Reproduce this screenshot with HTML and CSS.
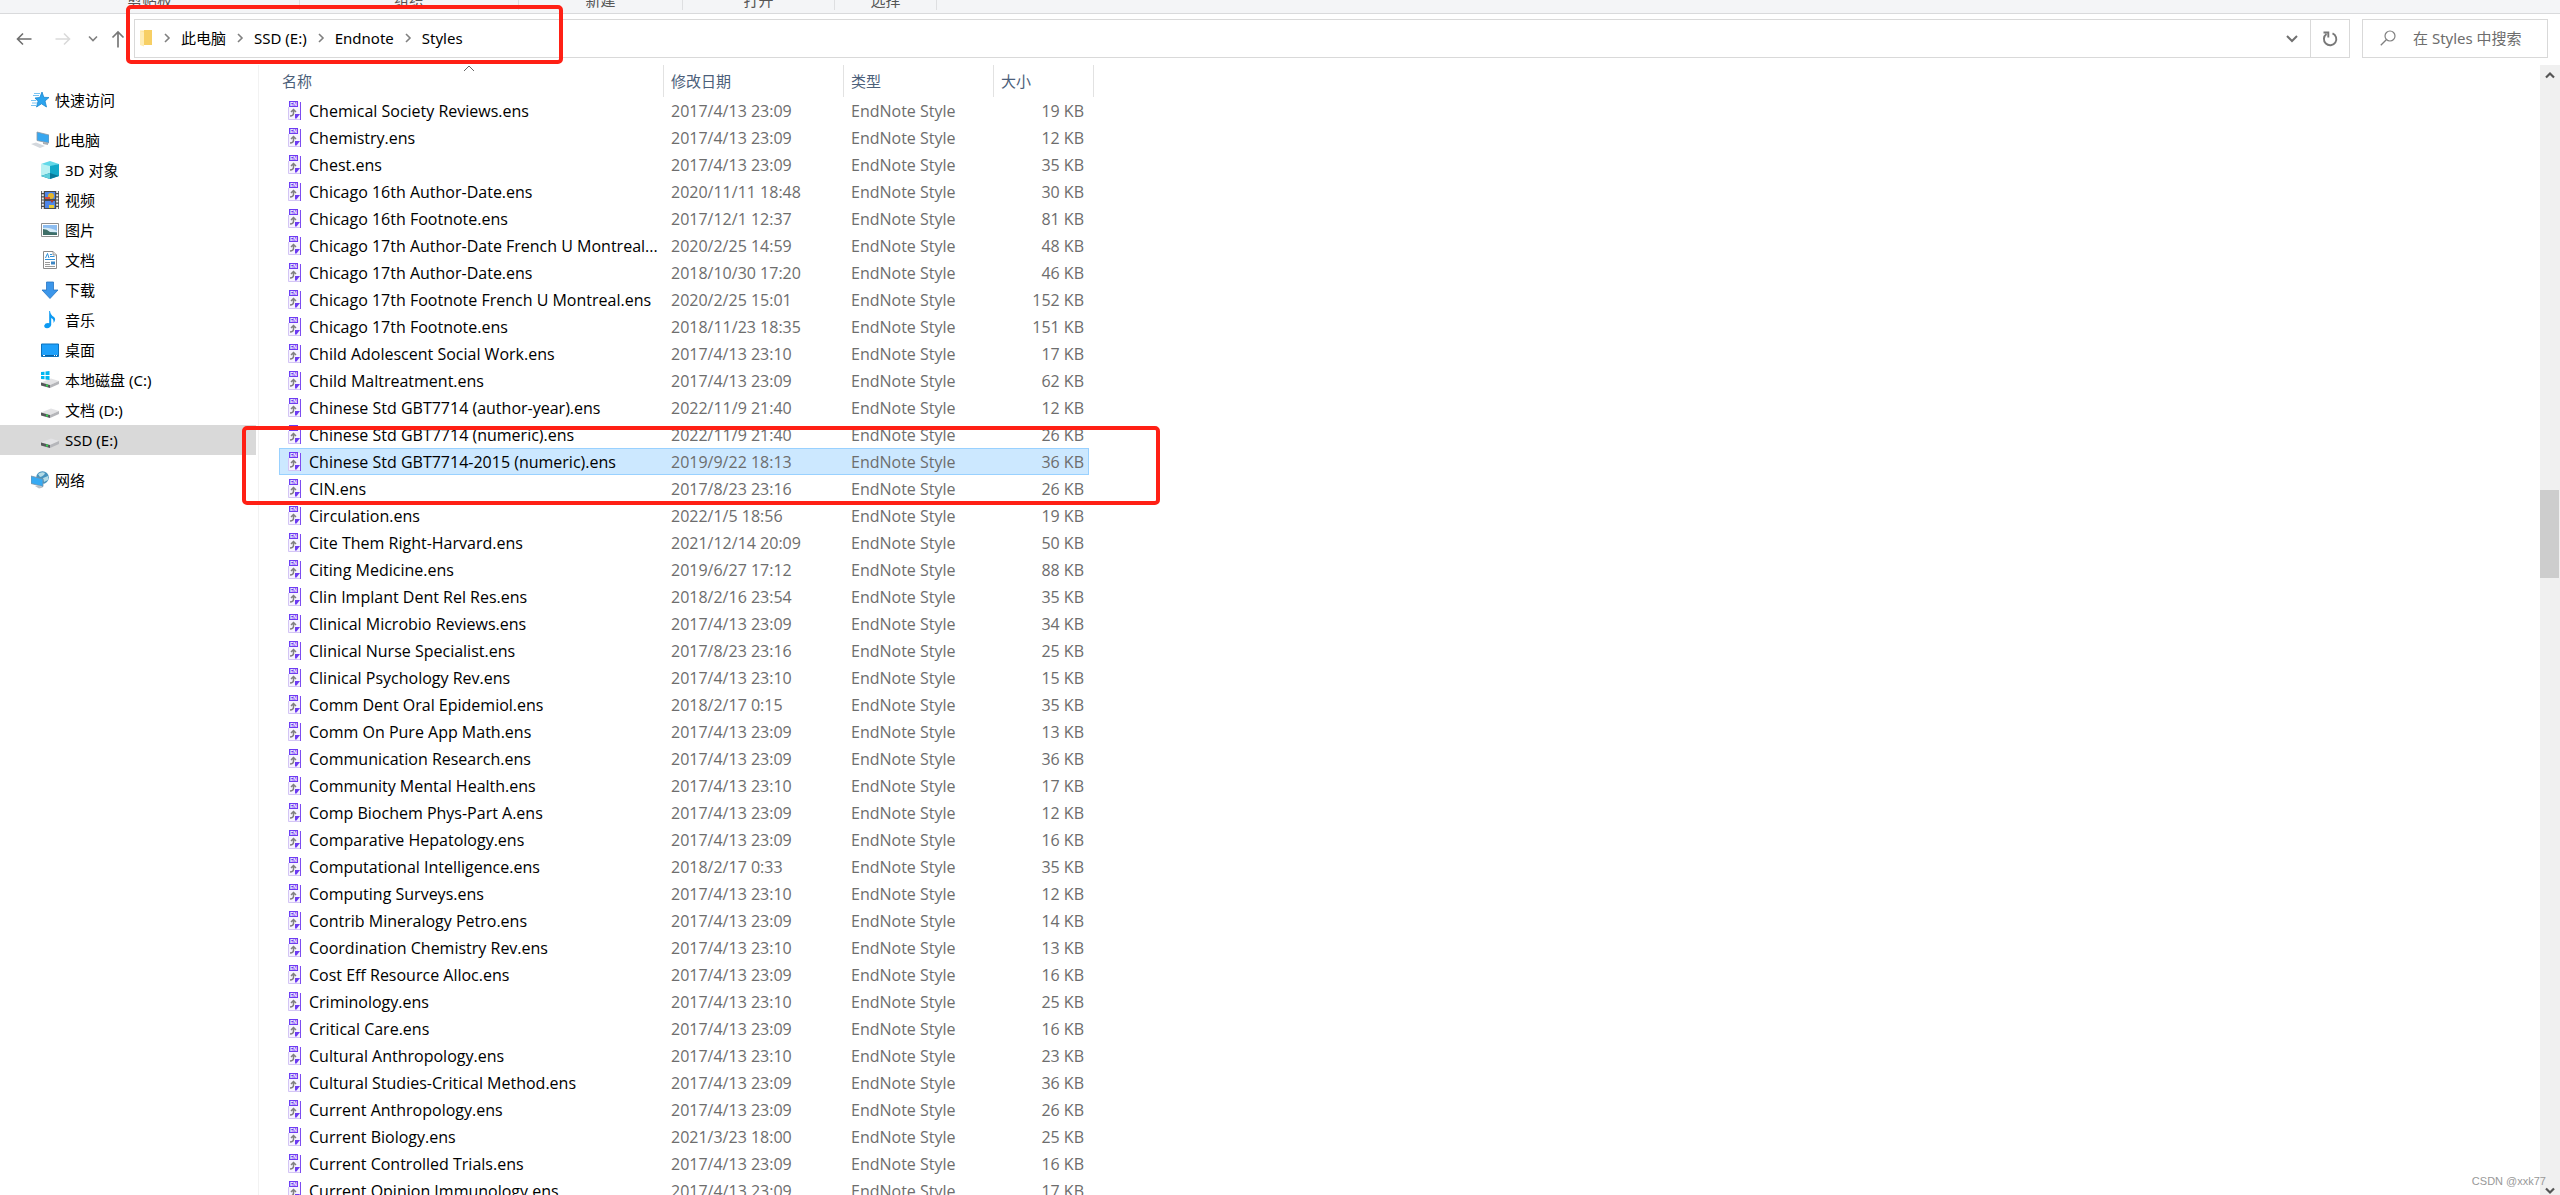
FILE: index.html
```html
<!DOCTYPE html>
<html lang="zh-CN">
<head>
<meta charset="utf-8">
<title>Styles</title>
<link rel="stylesheet" href="styles.css">
</head>
<body>
<svg class="defs" aria-hidden="true">
  <symbol id="ens" viewBox="0 0 14 19">
    <path d="M1 1H12V18H1z" fill="#f6f3fe"/>
    <path d="M.5 6V18.500H12.500" fill="none" stroke="#d3c5f5"/>
    <path d="M12.500 1V19" stroke="#7d4cf0"/>
    <rect x="1" y="0" width="9" height="6" fill="#6d3bf2"/>
    <text x="5.500" y="5" text-anchor="middle" class="ens-tag">EN</text>
    <path d="M2 15Q5.500 15 5.500 12V9.500M3 11L5.500 8.500L8 11" fill="none" stroke="#808080" stroke-width="1.500"/>
    <path d="M7 13H12L8.500 17.500H7z" fill="#6d3bf2"/>
  </symbol>
  <symbol id="chev" viewBox="0 0 8 10"><path d="M2 1L6 5L2 9" fill="none" stroke="#808080" stroke-width="1.600"/></symbol>
  <symbol id="drive" viewBox="0 0 18 18">
    <path d="M0 11.500L10 7.500L18 10L9 14z" fill="#e3e3e5"/>
    <path d="M0 11.500L9 14V17L0 14.500z" fill="#55585a"/>
    <path d="M9 14L18 10V13L9 17z" fill="#b5b6ba"/>
    <rect x="5" y="13.500" width="2" height="2" fill="#39d353"/>
  </symbol>
</svg>

<header class="ribbon">
  <div class="group clipboard">剪贴板</div>
  <div class="group organize">组织</div>
  <div class="group new">新建</div>
  <div class="group open">打开</div>
  <div class="group select">选择</div>
</header>

<div class="toolbar">
  <div class="history">
    <button class="back" aria-label="返回"><svg width="16" height="14" viewBox="0 0 16 14"><path d="M15.500 7H1.500M7 1.500L1.500 7L7 12.500" fill="none" stroke="#6e6e6e" stroke-width="1.600"/></svg></button>
    <button class="forward" aria-label="前进"><svg width="16" height="14" viewBox="0 0 16 14"><path d="M.5 7H14.500M9 1.500L14.500 7L9 12.500" fill="none" stroke="#dadada" stroke-width="1.600"/></svg></button>
    <button class="recent" aria-label="最近浏览的位置"><svg width="10" height="8" viewBox="0 0 10 8"><path d="M1 1.500L5 5.500L9 1.500" fill="none" stroke="#808080" stroke-width="1.600"/></svg></button>
    <button class="up" aria-label="上移"><svg width="14" height="18" viewBox="0 0 14 18"><path d="M7 17.500V2M1.500 7.500L7 2L12.500 7.500" fill="none" stroke="#787878" stroke-width="1.700"/></svg></button>
  </div>
  <div class="address">
    <nav class="crumbs" aria-label="地址">
      <svg class="folder" width="14" height="18" viewBox="0 0 14 18"><path d="M1 1.500H7V16H1z" fill="#ffe59b"/><path d="M5 1H13V16H5z" fill="#f7cf64"/><path d="M1 2L5 3.500V17.500L1 16z" fill="#ffedb5"/></svg>
      <svg class="sep"><use href="#chev"/></svg><a href="#">此电脑</a>
      <svg class="sep"><use href="#chev"/></svg><a href="#">SSD (E:)</a>
      <svg class="sep"><use href="#chev"/></svg><a href="#">Endnote</a>
      <svg class="sep"><use href="#chev"/></svg><a href="#">Styles</a>
    </nav>
    <button class="drop" aria-label="以前的位置"><svg width="12" height="8" viewBox="0 0 12 8"><path d="M1 1L6 6L11 1" fill="none" stroke="#707070" stroke-width="2"/></svg></button>
    <button class="refresh" aria-label="刷新"><svg width="16" height="16" viewBox="0 0 16 16"><path d="M10.500 2.300A6.200 6.200 0 1 1 4.500 3M1.500 1.500H6.300V6.500" fill="none" stroke="#787878" stroke-width="1.900"/></svg></button>
  </div>
  <label class="search">
    <svg width="16" height="16" viewBox="0 0 16 16"><circle cx="10" cy="6" r="5" fill="none" stroke="#808080" stroke-width="1.200"/><path d="M6.300 9.700L.8 15.200" stroke="#808080" stroke-width="1.300"/></svg>
    <input type="search" placeholder="在 Styles 中搜索" aria-label="在 Styles 中搜索">
  </label>
</div>

<main class="body">
  <nav class="tree" aria-label="导航窗格">
    <ul>
      <li><a href="#"><svg viewBox="0 0 18 18"><path d="M11 1L12.800 6.300L18 6.500L14 10L15.500 16L10.500 12.800L5.500 16L7 10.300L4 7L8.800 6.500z" fill="#2ba4ee" stroke="#1c86cf" stroke-width=".8"/><path d="M2 4.500H8M3 2.500H9M0 9.500H5M1 12H6M0 14.500H5" stroke="#78c3f2"/></svg>快速访问</a></li>
    </ul>
    <ul>
      <li><a href="#"><svg viewBox="0 0 18 18"><path d="M6 1L18 4V12L6 9.500z" fill="#37a7f0" stroke="#8a98a5" stroke-width=".8"/><path d="M12 11V13L17 14V12" fill="#a8adb3"/><path d="M0 13L5 11.500L14 15L9 17z" fill="#d4d8dd"/></svg>此电脑</a></li>
      <li class="child"><a href="#"><svg viewBox="0 0 18 18"><path d="M0 3L9 0L18 3L9 6z" fill="#62d8e8"/><path d="M0 3L9 5V18L0 15z" fill="#b8f1f3"/><path d="M9 5L18 3V15L9 18z" fill="#12a9c9"/><path d="M0 15L9 12L18 15L9 18z" fill="#08799a"/><path d="M0 15L9 12V18z" fill="#5fcfdb"/></svg>3D 对象</a></li>
      <li class="child"><a href="#"><svg viewBox="0 0 18 18"><path d="M0 0H18V18H0z" fill="#4a4a4a"/><path d="M1.800 0V18M16.200 0V18" stroke="#eee" stroke-width="2" stroke-dasharray="2 1.200"/><path d="M4 1H14V8H4zM4 10H14V17H4z" fill="#4f86e8"/><circle cx="10" cy="5" r="3" fill="#e4b52c"/><path d="M4 6H9V8H4z" fill="#d84b3c"/><path d="M8 14H13V17H8z" fill="#e9cb33"/><path d="M9 9H13L11 12z" fill="#a63c2e"/></svg>视频</a></li>
      <li class="child"><a href="#"><svg viewBox="0 0 18 18"><path d="M.5 2.500H17.500V15.500H.5z" fill="#fff" stroke="#8f8f8f"/><path d="M2 4H16V14H2z" fill="#8dbdf0"/><path d="M2 7Q8 6 16 10V11H2z" fill="#d8ecf7"/><path d="M2 8Q6 8 9 11L16 11.500V14H2z" fill="#3f6f68"/></svg>图片</a></li>
      <li class="child"><a href="#"><svg viewBox="0 0 18 18"><path d="M2.500 .5H12L15.500 4V17.500H2.500z" fill="#fff" stroke="#8a8a8a"/><path d="M12 .5V4H15.500" fill="#ddd" stroke="#8a8a8a" stroke-width=".8"/><path d="M4.500 7L6.500 2.500L8 7M9 3.500H11M9 5.500H13.500M4 8.500H14" stroke="#2d8fd8" fill="none"/><path d="M4 11.500H9M4 13.500H9M4 15.500H14" stroke="#9a9a9a"/><path d="M10 10.500H14V13.500H10z" fill="#3c86c4"/></svg>文档</a></li>
      <li class="child"><a href="#"><svg viewBox="0 0 18 18"><path d="M5.500 1H12.500V9H17L9 17.500L1 9H5.500z" fill="#3b96ea" stroke="#2775c2" stroke-width=".8"/></svg>下载</a></li>
      <li class="child"><a href="#"><svg viewBox="0 0 18 18"><path d="M9 0Q9.500 4 13 6Q15.500 8 12.500 12Q13 8 10.200 7V14Q9.500 17 6 17.300Q3 17 3.200 14.500Q4.500 11.500 8.200 12.200V0z" fill="#0d9af2"/></svg>音乐</a></li>
      <li class="child"><a href="#"><svg viewBox="0 0 18 18"><path d="M.5 3H17.500V15.500H.5z" fill="#1ea0fa" stroke="#0b72bd"/><path d="M1 14.500H17" stroke="#0b5f9f"/><path d="M2 14.500H4M13 14.500H14M15 14.500H16" stroke="#fff"/></svg>桌面</a></li>
      <li class="child"><a href="#"><svg viewBox="0 0 18 18"><use href="#drive"/><path d="M0 1L3.500 .7V4H0zM4.500 .6L8.500 0V4H4.500zM0 5H3.500V8.300L0 8zM4.500 5H8.500V9L4.500 8.400z" fill="#00b7f1"/></svg>本地磁盘 (C:)</a></li>
      <li class="child"><a href="#"><svg viewBox="0 0 18 18"><use href="#drive"/></svg>文档 (D:)</a></li>
      <li class="child current"><a href="#"><svg viewBox="0 0 18 18"><use href="#drive"/></svg>SSD (E:)</a></li>
    </ul>
    <ul>
      <li><a href="#"><svg viewBox="0 0 18 18"><circle cx="11.500" cy="6.500" r="6.300" fill="#4592bd"/><path d="M7 3Q11 0 14 2Q13 5 9 6zM12 7L17 5V9L13 11z" fill="#b3dbe6"/><path d="M0 5L12 8V15.500L0 12.500z" fill="#36aaf3" stroke="#7890a2" stroke-width=".8"/><path d="M4 15L8 14.500L12 16.500L8 17.500z" fill="#b9c1c8"/></svg>网络</a></li>
    </ul>
  </nav>

  <section class="files">
    <table>
      <colgroup><col class="c-name"><col class="c-date"><col class="c-type"><col class="c-size"><col class="c-tail"></colgroup>
      <thead><tr>
        <th scope="col">名称<svg class="sort" width="12" height="7" viewBox="0 0 12 7"><path d="M1 6L6 1L11 6" fill="none" stroke="#666"/></svg></th>
        <th scope="col">修改日期</th><th scope="col">类型</th><th scope="col" colspan="2">大小</th>
      </tr></thead>
      <tbody>
        <tr><td><svg><use href="#ens"/></svg>Chemical Society Reviews.ens</td><td>2017/4/13 23:09</td><td>EndNote Style</td><td>19 KB</td></tr>
        <tr><td><svg><use href="#ens"/></svg>Chemistry.ens</td><td>2017/4/13 23:09</td><td>EndNote Style</td><td>12 KB</td></tr>
        <tr><td><svg><use href="#ens"/></svg>Chest.ens</td><td>2017/4/13 23:09</td><td>EndNote Style</td><td>35 KB</td></tr>
        <tr><td><svg><use href="#ens"/></svg>Chicago 16th Author-Date.ens</td><td>2020/11/11 18:48</td><td>EndNote Style</td><td>30 KB</td></tr>
        <tr><td><svg><use href="#ens"/></svg>Chicago 16th Footnote.ens</td><td>2017/12/1 12:37</td><td>EndNote Style</td><td>81 KB</td></tr>
        <tr><td><svg><use href="#ens"/></svg>Chicago 17th Author-Date French U Montreal...</td><td>2020/2/25 14:59</td><td>EndNote Style</td><td>48 KB</td></tr>
        <tr><td><svg><use href="#ens"/></svg>Chicago 17th Author-Date.ens</td><td>2018/10/30 17:20</td><td>EndNote Style</td><td>46 KB</td></tr>
        <tr><td><svg><use href="#ens"/></svg>Chicago 17th Footnote French U Montreal.ens</td><td>2020/2/25 15:01</td><td>EndNote Style</td><td>152 KB</td></tr>
        <tr><td><svg><use href="#ens"/></svg>Chicago 17th Footnote.ens</td><td>2018/11/23 18:35</td><td>EndNote Style</td><td>151 KB</td></tr>
        <tr><td><svg><use href="#ens"/></svg>Child Adolescent Social Work.ens</td><td>2017/4/13 23:10</td><td>EndNote Style</td><td>17 KB</td></tr>
        <tr><td><svg><use href="#ens"/></svg>Child Maltreatment.ens</td><td>2017/4/13 23:09</td><td>EndNote Style</td><td>62 KB</td></tr>
        <tr><td><svg><use href="#ens"/></svg>Chinese Std GBT7714 (author-year).ens</td><td>2022/11/9 21:40</td><td>EndNote Style</td><td>12 KB</td></tr>
        <tr><td><svg><use href="#ens"/></svg>Chinese Std GBT7714 (numeric).ens</td><td>2022/11/9 21:40</td><td>EndNote Style</td><td>26 KB</td></tr>
        <tr class="selected"><td><svg><use href="#ens"/></svg>Chinese Std GBT7714-2015 (numeric).ens</td><td>2019/9/22 18:13</td><td>EndNote Style</td><td>36 KB</td></tr>
        <tr><td><svg><use href="#ens"/></svg>CIN.ens</td><td>2017/8/23 23:16</td><td>EndNote Style</td><td>26 KB</td></tr>
        <tr><td><svg><use href="#ens"/></svg>Circulation.ens</td><td>2022/1/5 18:56</td><td>EndNote Style</td><td>19 KB</td></tr>
        <tr><td><svg><use href="#ens"/></svg>Cite Them Right-Harvard.ens</td><td>2021/12/14 20:09</td><td>EndNote Style</td><td>50 KB</td></tr>
        <tr><td><svg><use href="#ens"/></svg>Citing Medicine.ens</td><td>2019/6/27 17:12</td><td>EndNote Style</td><td>88 KB</td></tr>
        <tr><td><svg><use href="#ens"/></svg>Clin Implant Dent Rel Res.ens</td><td>2018/2/16 23:54</td><td>EndNote Style</td><td>35 KB</td></tr>
        <tr><td><svg><use href="#ens"/></svg>Clinical Microbio Reviews.ens</td><td>2017/4/13 23:09</td><td>EndNote Style</td><td>34 KB</td></tr>
        <tr><td><svg><use href="#ens"/></svg>Clinical Nurse Specialist.ens</td><td>2017/8/23 23:16</td><td>EndNote Style</td><td>25 KB</td></tr>
        <tr><td><svg><use href="#ens"/></svg>Clinical Psychology Rev.ens</td><td>2017/4/13 23:10</td><td>EndNote Style</td><td>15 KB</td></tr>
        <tr><td><svg><use href="#ens"/></svg>Comm Dent Oral Epidemiol.ens</td><td>2018/2/17 0:15</td><td>EndNote Style</td><td>35 KB</td></tr>
        <tr><td><svg><use href="#ens"/></svg>Comm On Pure App Math.ens</td><td>2017/4/13 23:09</td><td>EndNote Style</td><td>13 KB</td></tr>
        <tr><td><svg><use href="#ens"/></svg>Communication Research.ens</td><td>2017/4/13 23:09</td><td>EndNote Style</td><td>36 KB</td></tr>
        <tr><td><svg><use href="#ens"/></svg>Community Mental Health.ens</td><td>2017/4/13 23:10</td><td>EndNote Style</td><td>17 KB</td></tr>
        <tr><td><svg><use href="#ens"/></svg>Comp Biochem Phys-Part A.ens</td><td>2017/4/13 23:09</td><td>EndNote Style</td><td>12 KB</td></tr>
        <tr><td><svg><use href="#ens"/></svg>Comparative Hepatology.ens</td><td>2017/4/13 23:09</td><td>EndNote Style</td><td>16 KB</td></tr>
        <tr><td><svg><use href="#ens"/></svg>Computational Intelligence.ens</td><td>2018/2/17 0:33</td><td>EndNote Style</td><td>35 KB</td></tr>
        <tr><td><svg><use href="#ens"/></svg>Computing Surveys.ens</td><td>2017/4/13 23:10</td><td>EndNote Style</td><td>12 KB</td></tr>
        <tr><td><svg><use href="#ens"/></svg>Contrib Mineralogy Petro.ens</td><td>2017/4/13 23:09</td><td>EndNote Style</td><td>14 KB</td></tr>
        <tr><td><svg><use href="#ens"/></svg>Coordination Chemistry Rev.ens</td><td>2017/4/13 23:10</td><td>EndNote Style</td><td>13 KB</td></tr>
        <tr><td><svg><use href="#ens"/></svg>Cost Eff Resource Alloc.ens</td><td>2017/4/13 23:09</td><td>EndNote Style</td><td>16 KB</td></tr>
        <tr><td><svg><use href="#ens"/></svg>Criminology.ens</td><td>2017/4/13 23:10</td><td>EndNote Style</td><td>25 KB</td></tr>
        <tr><td><svg><use href="#ens"/></svg>Critical Care.ens</td><td>2017/4/13 23:09</td><td>EndNote Style</td><td>16 KB</td></tr>
        <tr><td><svg><use href="#ens"/></svg>Cultural Anthropology.ens</td><td>2017/4/13 23:10</td><td>EndNote Style</td><td>23 KB</td></tr>
        <tr><td><svg><use href="#ens"/></svg>Cultural Studies-Critical Method.ens</td><td>2017/4/13 23:09</td><td>EndNote Style</td><td>36 KB</td></tr>
        <tr><td><svg><use href="#ens"/></svg>Current Anthropology.ens</td><td>2017/4/13 23:09</td><td>EndNote Style</td><td>26 KB</td></tr>
        <tr><td><svg><use href="#ens"/></svg>Current Biology.ens</td><td>2021/3/23 18:00</td><td>EndNote Style</td><td>25 KB</td></tr>
        <tr><td><svg><use href="#ens"/></svg>Current Controlled Trials.ens</td><td>2017/4/13 23:09</td><td>EndNote Style</td><td>16 KB</td></tr>
        <tr><td><svg><use href="#ens"/></svg>Current Opinion Immunology.ens</td><td>2017/4/13 23:09</td><td>EndNote Style</td><td>17 KB</td></tr>
      </tbody>
    </table>
  </section>

  <div class="scrollbar" aria-hidden="true">
    <svg width="10" height="8" viewBox="0 0 10 8"><path d="M1 6.500L5 2.500L9 6.500" fill="none" stroke="#555" stroke-width="2.200"/></svg>
    <div class="track"><div class="thumb"></div></div>
    <svg width="10" height="8" viewBox="0 0 10 8"><path d="M1 1.500L5 5.500L9 1.500" fill="none" stroke="#555" stroke-width="2.200"/></svg>
  </div>
</main>

<div class="mark mark-address"></div>
<div class="mark mark-file"></div>
<div class="watermark">CSDN @xxk77</div>
</body>
</html>
```

FILE: styles.css
```css
* { box-sizing: border-box; }

body {
  margin: 0;
  height: 100vh;
  display: flex;
  flex-direction: column;
  position: relative;
  overflow: hidden;
  background: #fff;
  color: #000;
  font: 15px/20px "Noto Sans", "Noto Sans CJK SC", sans-serif;
}

a { color: inherit; text-decoration: none; }
button { border: 0; padding: 0; background: none; display: flex; align-items: center; justify-content: center; }
svg { display: block; flex: none; }
.defs { position: absolute; width: 0; height: 0; }

/* Bottom edge of the ribbon */
.ribbon {
  flex: none;
  display: flex;
  height: 14px;
  padding-bottom: 3px;
  background: #f4f5f7;
  border-bottom: 1px solid #d9dadc;
  color: #555;
}
.group {
  display: flex;
  align-items: flex-end;
  justify-content: center;
  overflow: hidden;
  border-right: 1px solid #dedfe1;
}
.clipboard { width: 300px; }
.organize { width: 219px; }
.new { width: 164px; }
.open { width: 152px; }
.select { width: 102px; }

/* Address row */
.toolbar {
  flex: none;
  display: flex;
  height: 51px;
  padding: 5px 12px 7px 16px;
}
.history { display: flex; width: 118px; }
.forward { margin-left: 23px; }
.recent { margin-left: 17px; }
.up { margin-left: 13px; }
.address { flex: 1; display: flex; border: 1px solid #d9d9d9; }
.crumbs { flex: 1; display: flex; align-items: center; padding: 0 0 2px 4px; }
.sep { width: 8px; height: 10px; margin: 0 10px; }
.drop { width: 36px; }
.refresh { width: 39px; border-left: 1px solid #d9d9d9; }
.search {
  display: flex;
  align-items: center;
  width: 186px;
  margin-left: 12px;
  padding: 0 0 2px 17px;
  border: 1px solid #d9d9d9;
}
.search input {
  flex: 1;
  min-width: 0;
  margin-left: 17px;
  padding: 0;
  border: 0;
  outline: 0;
  background: none;
  font: inherit;
}
.search input::placeholder { color: #6d6d6d; opacity: 1; }

.body { flex: 1; min-height: 0; display: flex; }

/* Navigation pane */
.tree { width: 259px; padding: 20px 2px 0 0; border-right: 1px solid #f2f2f2; }
.tree ul { margin: 0 0 10px; padding: 0; list-style: none; }
.tree a { display: flex; align-items: center; gap: 6px; height: 30px; padding-left: 31px; }
.tree .child a { padding-left: 41px; }
.tree .current { background: #d9d9d9; }
.tree svg { width: 18px; height: 18px; }

/* File list */
.files { flex: 1; padding-left: 20px; overflow: hidden; }
table { width: 815px; table-layout: fixed; border-spacing: 0; }
.c-name { width: 385px; }
.c-date { width: 180px; }
.c-type { width: 150px; }
.c-size { width: 95px; }
.c-tail { width: 5px; }
th {
  position: relative;
  height: 32px;
  padding: 0 0 0 7px;
  border-right: 1px solid #e2e2e2;
  color: #4c607a;
  font-weight: 400;
  text-align: left;
}
th:first-child { padding-left: 3px; }
.sort { position: absolute; top: 0; left: 50%; margin-left: -8px; }
td {
  height: 27px;
  padding: 0 0 0 7px;
  color: #6d6d6d;
  font: 16px/20px "Open Sans", "Noto Sans CJK SC", sans-serif;
  white-space: nowrap;
}
td:first-child { padding-left: 9px; color: #000; }
td:last-child { padding-right: 5px; text-align: right; }
td svg { float: left; width: 14px; height: 19px; margin-right: 7px; }
.ens-tag { font: bold 5px "Liberation Sans", sans-serif; fill: #fff; }
.selected td { background: #cce8ff; border: solid #99d1ff; border-width: 1px 0; }
.selected td:first-child { border-left-width: 1px; padding-left: 8px; }
.selected td:last-child { border-right-width: 1px; padding-right: 4px; }

.scrollbar {
  width: 20px;
  display: flex;
  flex-direction: column;
  align-items: center;
  padding: 6px 1px 0 0;
  background: #f0f0f0;
}
.track { flex: 1; align-self: stretch; padding-top: 411px; }
.thumb { height: 88px; background: #cdcdcd; }

/* Red annotations over the window */
.mark { position: absolute; border: 4px solid #ff2015; border-radius: 5px; }
.mark-address { left: 126px; top: 5px; width: 437px; height: 59px; }
.mark-file { left: 242px; top: 426px; width: 918px; height: 79px; }
.watermark {
  position: absolute;
  right: 14px;
  bottom: 4px;
  color: #999;
  font: 11px/20px "Liberation Sans", Arial, sans-serif;
}
```
